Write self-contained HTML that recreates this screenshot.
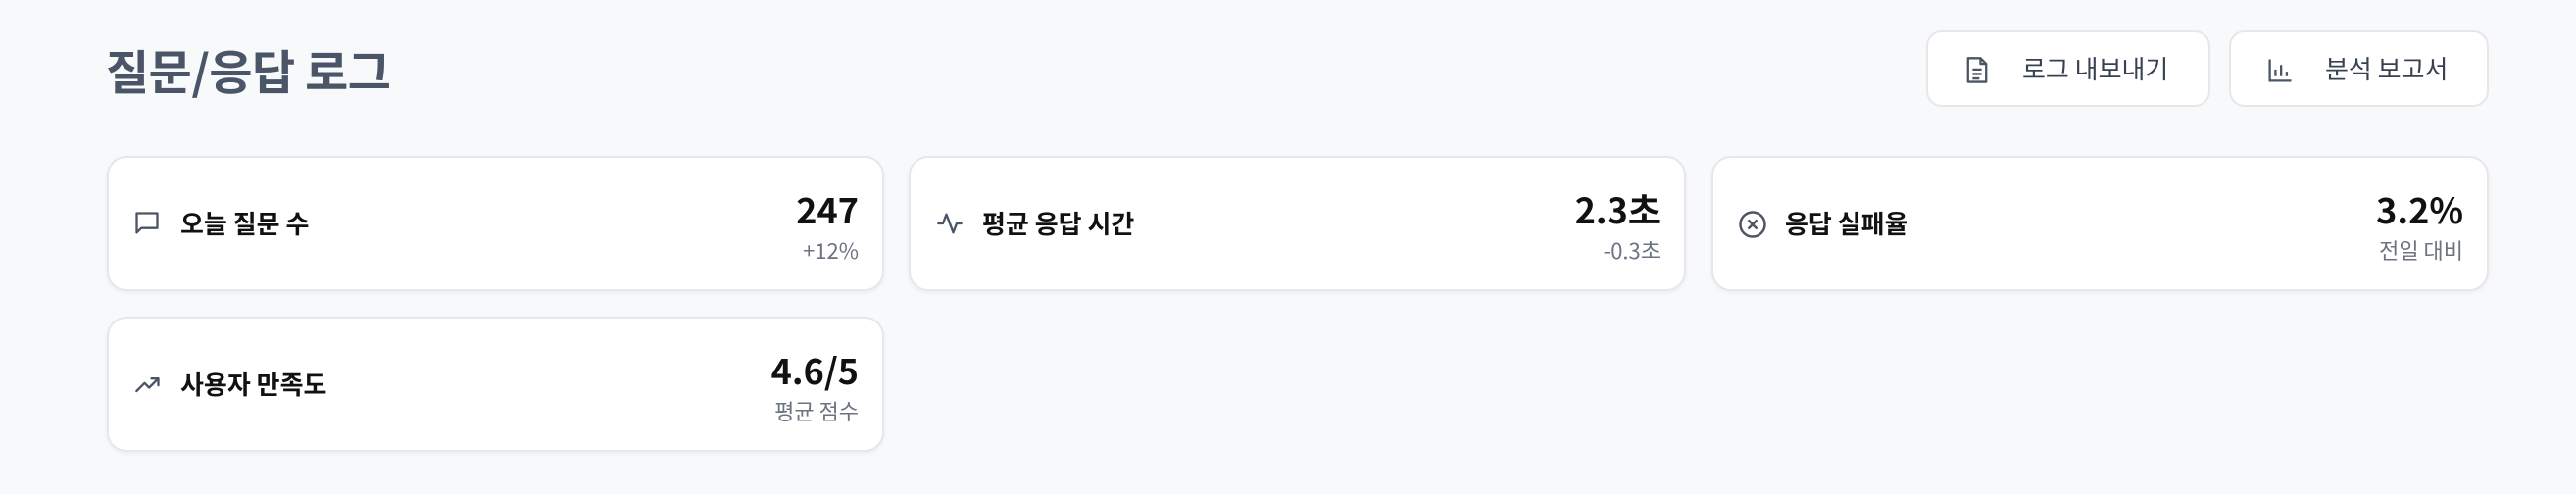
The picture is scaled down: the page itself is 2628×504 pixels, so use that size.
<!DOCTYPE html>
<html><head><meta charset="utf-8"><style>
*{margin:0;padding:0;box-sizing:border-box}
body{width:2628px;height:504px;background:#f8f9fb;font-family:"Noto Sans CJK KR","Liberation Sans",sans-serif;position:relative;overflow:hidden;line-height:1}
h1{position:absolute;left:108px;top:46px;font-size:48px;font-weight:700;color:#4a5568;letter-spacing:-0.5px}
.btn{position:absolute;top:31px;height:78px;background:#fff;border:2px solid #e5e7eb;border-radius:16px;font-size:26px;color:#374151}
.btn svg{position:absolute;left:36px;top:24px}
.btn span{position:absolute;left:96px;top:24px}
.card{position:absolute;width:793px;height:138px;background:#fff;border:2px solid #e5e7eb;border-radius:20px;box-shadow:0 2px 4px rgba(0,0,0,0.05)}
.card svg{position:absolute;left:25px;top:53px}
.lbl{position:absolute;left:73px;top:54px;font-size:26px;font-weight:700;color:#111}
.val{position:absolute;right:24px;top:34px;font-size:36px;font-weight:700;color:#111;text-align:right}
.sub{position:absolute;right:24px;top:83px;font-size:22px;color:#6b7280;text-align:right}
</style></head><body>
<h1>질문/응답 로그</h1>
<div class="btn" style="left:1965px;width:290px">
<svg width="28" height="30" viewBox="0 0 24 26" fill="none" stroke="#4b5563" stroke-width="2" stroke-linejoin="round"><path d="M4 2h11l5 5v16H4z"/><path d="M15 2v5h5M8 12h8M8 16h8M8 20h6"/></svg>
<span>로그 내보내기</span></div>
<div class="btn" style="left:2274px;width:265px">
<svg width="28" height="30" viewBox="0 0 24 26" fill="none" stroke="#4b5563" stroke-width="2"><path d="M3 3v19h19M8 18v-6M13 18V8M18 18v-4"/></svg>
<span>분석 보고서</span></div>

<div class="card" style="left:109px;top:159px">
<svg width="28" height="28" viewBox="0 0 24 24" fill="none" stroke="#4b5563" stroke-width="2" stroke-linejoin="round"><path d="M3 3h18v13H7l-4 4z"/></svg>
<div class="lbl">오늘 질문 수</div><div class="val">247</div><div class="sub">+12%</div></div>

<div class="card" style="left:927px;top:159px">
<svg width="30" height="28" viewBox="0 0 24 24" fill="none" stroke="#4b5563" stroke-width="2" stroke-linecap="round" stroke-linejoin="round"><path d="M2 12h4l3-8 6 16 3-8h4"/></svg>
<div class="lbl">평균 응답 시간</div><div class="val">2.3초</div><div class="sub">-0.3초</div></div>

<div class="card" style="left:1746px;top:159px">
<svg width="30" height="30" viewBox="0 0 24 24" fill="none" stroke="#4b5563" stroke-width="2" stroke-linecap="round"><circle cx="12" cy="12" r="10"/><path d="M9 9l6 6M15 9l-6 6"/></svg>
<div class="lbl">응답 실패율</div><div class="val">3.2%</div><div class="sub">전일 대비</div></div>

<div class="card" style="left:109px;top:323px">
<svg width="30" height="28" viewBox="0 0 24 24" fill="none" stroke="#4b5563" stroke-width="2" stroke-linecap="round" stroke-linejoin="round"><path d="M2 18l7-7 4 4 8-8M15 7h6v6"/></svg>
<div class="lbl">사용자 만족도</div><div class="val">4.6/5</div><div class="sub">평균 점수</div></div>
</body></html>
